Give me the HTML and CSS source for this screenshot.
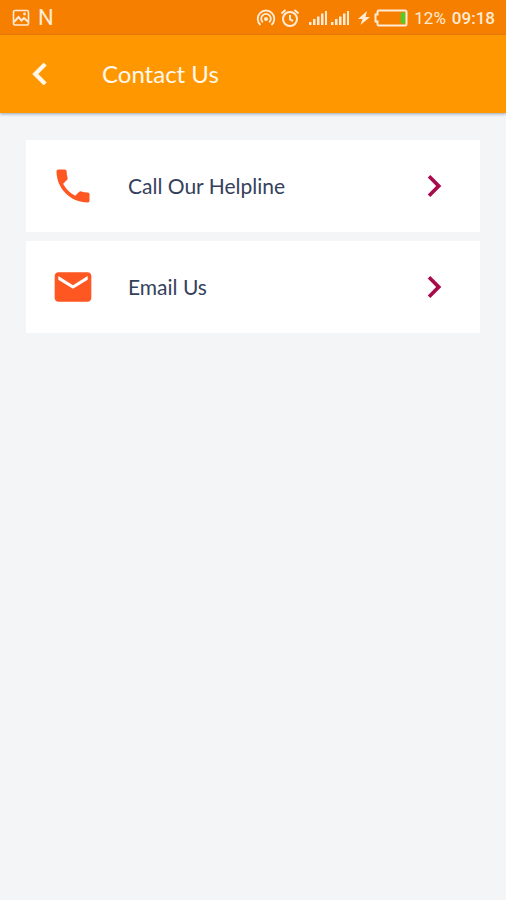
FILE: index.html
```html
<!DOCTYPE html>
<html lang="en">
<head>
<meta charset="utf-8">
<meta name="viewport" content="width=device-width, initial-scale=1">
<title>Contact Us</title>
<link rel="stylesheet" href="styles.css">
</head>
<body>
<div class="status">
  <div class="status-group">
    <svg width="18" height="18" viewBox="0 0 18 18" fill="none" stroke="currentColor" stroke-width="1.6"><rect x="1.5" y="1.5" width="15" height="14.5" rx="1.5"/><path d="M2 13l4.500-5 3 3.500 2.500-2.500 4.500 4" stroke-width="2"/><circle cx="12.500" cy="5" r=".6"/></svg>
    <span class="network">N</span>
  </div>
  <div class="status-group status-right">
    <svg width="20" height="18" viewBox="0 0 20 18" fill="none" stroke="currentColor" stroke-width="1.8"><path d="M4.500 16a8.300 8.300 0 1 1 11 0M6.800 13.300a4.800 4.800 0 1 1 6.400 0"/><circle cx="10" cy="10" r="2" fill="currentColor" stroke="none"/></svg>
    <svg width="20" height="20" viewBox="0 0 20 20" fill="none" stroke="currentColor" stroke-width="2"><circle cx="10" cy="11" r="7"/><path d="M1.500 5.500l4-3.500M18.500 5.500l-4-3.500M10 7v4.500l3 1.500"/></svg>
    <svg class="signal" width="42" height="16" viewBox="0 0 42 16" fill="currentColor"><path d="M1 12h2.500v3H1zM5 9h2.500v6H5zM9 6.500h2.500V15H9zM13 3.500h2.500V15H13zM17 1h2v14h-2zM23 12h2.500v3H23zM27 9h2.500v6H27zM31 6.500h2.500V15H31zM35 3.500h2.500V15H35zM39 1h2v14h-2z"/></svg>
    <svg width="12" height="16" viewBox="0 0 12 16" fill="currentColor"><path d="M9 1L0 9h4.500l-2 6L12 7H7.500z"/></svg>
    <svg width="34" height="18" viewBox="0 0 34 18"><path d="M5 1.500h26q1.500 0 1.500 1.500v12q0 1.500-1.500 1.500H5Q3.500 16.500 3.500 15v-2.500H1.500v-7h2V3Q3.500 1.500 5 1.500z" fill="none" stroke="currentColor" stroke-width="2"/><path class="charge" d="M27 3.500h4v11h-4z"/></svg>
    <span class="percent">12%</span>
    <time class="clock">09:18</time>
  </div>
</div>
<header class="bar">
  <button class="back" type="button" aria-label="Back"><svg class="icon" viewBox="0 0 24 24"><path d="M15.410 7.410L14 6l-6 6 6 6 1.410-1.410L10.830 12z" stroke="currentColor" stroke-width=".4"/></svg></button>
  <h1 class="title">Contact Us</h1>
</header>
<main class="list">
  <a class="card" href="#call">
    <svg class="icon" viewBox="0 0 24 24"><path d="M6.620 10.790c1.440 2.830 3.760 5.140 6.590 6.590l2.200-2.200c.27-.27.67-.36 1.020-.24 1.120.37 2.330.57 3.570.57.55 0 1 .45 1 1V20c0 .55-.45 1-1 1-9.390 0-17-7.610-17-17 0-.55.45-1 1-1h3.500c.55 0 1 .45 1 1 0 1.250.2 2.450.57 3.570.11.35.03.74-.25 1.020l-2.200 2.200z"/></svg>
    <span class="label">Call Our Helpline</span>
    <svg class="icon arrow" viewBox="0 0 24 24"><path d="M10 6L8.590 7.410 13.170 12l-4.580 4.590L10 18l6-6z"/></svg>
  </a>
  <a class="card" href="#email">
    <svg class="icon" viewBox="0 0 24 24"><path d="M20 4H4c-1.100 0-1.990.9-1.990 2L2 18c0 1.100.9 2 2 2h16c1.100 0 2-.9 2-2V6c0-1.100-.9-2-2-2zm0 4l-8 5-8-5V6l8 5 8-5v2z"/></svg>
    <span class="label">Email Us</span>
    <svg class="icon arrow" viewBox="0 0 24 24"><path d="M10 6L8.590 7.410 13.170 12l-4.580 4.590L10 18l6-6z"/></svg>
  </a>
</main>
</body>
</html>
```
FILE: styles.css
```css
* { box-sizing: border-box; }
body {
  margin: 0;
  min-height: 100vh;
  background: #f3f5f7;
  font-family: Lato, "Liberation Sans", sans-serif;
}
.status {
  display: flex;
  justify-content: space-between;
  align-items: center;
  height: 35px;
  padding: 0 11px 0 12px;
  background: #f77f00;
  color: #ffebd6;
  font-family: Roboto, sans-serif;
}
.status-group { display: flex; align-items: center; gap: 8px; }
.status-right { gap: 4px; }
.signal { margin: 0 4px; }
.network { font-size: 22px; }
.charge { fill: #3fd52c; }
.percent { font-size: 17px; margin: 0 2px; }
.clock { font-size: 17px; font-weight: 500; }
.bar {
  display: flex;
  align-items: center;
  gap: 40px;
  height: 78px;
  padding: 0 18px;
  background: #ff9800;
  color: #fff8ee;
  box-shadow: 0 1px 3px rgba(60, 80, 110, .5);
}
.back {
  display: flex;
  padding: 0;
  border: 0;
  background: none;
  color: inherit;
}
.title { margin: 0; padding-bottom: 2px; font-size: 24px; font-weight: 400; }
.icon { width: 44px; height: 44px; flex: none; fill: currentColor; }
.list {
  display: flex;
  flex-direction: column;
  gap: 9px;
  padding: 27px 26px;
}
.card {
  display: flex;
  align-items: center;
  gap: 33px;
  padding: 24px;
  padding-left: 25px;
  background: #fff;
  color: #ff5722;
  text-decoration: none;
}
.label { flex: 1; padding-bottom: 2px; color: #35415c; font-size: 21px; }
.arrow { color: #a80a4c; }
```
